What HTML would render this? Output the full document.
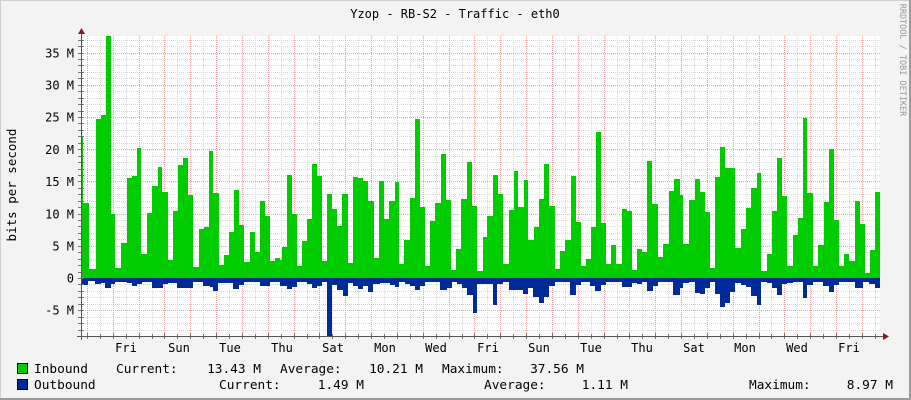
<!DOCTYPE html>
<html><head><meta charset="utf-8"><style>
html,body{margin:0;padding:0;background:#F3F3F3}
svg{display:block}
text{font-family:"DejaVu Sans Mono","Liberation Mono",monospace;fill:#000}
</style></head><body>
<svg id="g" width="911" height="400" xmlns="http://www.w3.org/2000/svg">
<rect x="0" y="0" width="911" height="400" fill="#F3F3F3"/>
<rect x="0.5" y="0.5" width="909" height="398" fill="none" stroke="#CFCFCF"/>
<line x1="910" y1="0" x2="910" y2="400" stroke="#9A9A9A" stroke-width="2"/>
<line x1="0" y1="399" x2="911" y2="399" stroke="#9A9A9A" stroke-width="2"/>
<rect x="81" y="36" width="799" height="300" fill="#FFFFFF"/>
<g id="grid"></g>
<path fill="#00CC00" d="M81,278 V136 H83 V203 H89 V269 H96 V119 H101 V115 H106 V36 H111 V214 H115 V268 H121 V243 H127 V178 H132 V176 H137 V148 H141 V254 H147 V213 H152 V186 H158 V167 H162 V192 H168 V260 H173 V211 H178 V165 H183 V158 H188 V195 H193 V267 H199 V229 H204 V227 H209 V151 H213 V193 H219 V265 H224 V255 H229 V232 H234 V190 H239 V225 H244 V262 H250 V232 H255 V252 H260 V201 H265 V216 H270 V261 H275 V258 H280 V260 H282 V247 H287 V175 H292 V214 H297 V266 H302 V241 H307 V219 H312 V164 H317 V176 H322 V261 H327 V194 H332 V209 H337 V226 H342 V194 H348 V263 H353 V177 H358 V178 H363 V181 H368 V201 H374 V258 H379 V181 H384 V219 H389 V201 H395 V182 H399 V264 H404 V240 H410 V198 H415 V119 H420 V207 H425 V266 H430 V221 H435 V203 H441 V154 H446 V200 H451 V270 H456 V249 H461 V199 H467 V162 H472 V206 H477 V271 H483 V237 H487 V216 H493 V175 H498 V194 H503 V264 H509 V210 H514 V171 H518 V207 H524 V180 H528 V240 H534 V227 H539 V199 H544 V164 H549 V206 H555 V269 H560 V251 H565 V240 H571 V176 H576 V222 H581 V266 H586 V259 H591 V227 H596 V132 H601 V223 H606 V264 H611 V245 H616 V264 H622 V209 H627 V211 H632 V270 H637 V249 H642 V252 H647 V161 H652 V204 H658 V257 H663 V244 H669 V191 H674 V179 H680 V195 H683 V244 H689 V200 H695 V179 H700 V192 H705 V212 H710 V268 H715 V177 H720 V147 H725 V168 H735 V248 H741 V229 H746 V208 H751 V188 H757 V173 H761 V271 H767 V254 H772 V211 H777 V158 H782 V196 H787 V266 H793 V235 H798 V218 H803 V118 H807 V193 H813 V266 H818 V245 H824 V202 H829 V149 H834 V220 H839 V266 H844 V254 H849 V261 H855 V201 H860 V224 H865 V273 H870 V250 H875 V192 H880 V278 Z"/>
<path fill="#002A97" d="M81,278 V285 H88 V281 H95 V284 H101 V283 H105 V288 H111 V284 H115 V282 H127 V283 H132 V286 H137 V284 H142 V282 H152 V288 H163 V284 H168 V283 H177 V288 H193 V282 H203 V286 H210 V287 H213 V291 H218 V283 H233 V289 H239 V285 H244 V282 H260 V286 H270 V282 H280 V286 H287 V289 H292 V287 H297 V282 H307 V284 H312 V288 H317 V286 H322 V282 H327 V336 H332 V285 H337 V290 H343 V296 H348 V283 H353 V286 H358 V289 H363 V286 H368 V292 H373 V284 H380 V283 H390 V285 H395 V287 H399 V282 H405 V284 H410 V286 H415 V290 H420 V286 H425 V282 H440 V290 H447 V288 H452 V282 H457 V284 H462 V288 H467 V295 H473 V313 H477 V284 H487 V284 H493 V305 H497 V284 H503 V282 H509 V290 H523 V294 H528 V288 H533 V297 H539 V303 H544 V297 H549 V286 H555 V282 H570 V295 H576 V285 H581 V282 H590 V286 H595 V291 H601 V285 H606 V282 H622 V287 H632 V283 H637 V284 H642 V282 H647 V291 H653 V286 H658 V282 H673 V295 H680 V288 H683 V283 H689 V282 H695 V293 H700 V294 H705 V288 H710 V282 H715 V294 H720 V307 H725 V303 H730 V292 H735 V283 H741 V285 H746 V287 H751 V296 H757 V305 H761 V282 H767 V283 H772 V288 H777 V295 H782 V284 H787 V283 H793 V282 H803 V298 H807 V285 H813 V282 H823 V286 H829 V292 H834 V285 H839 V282 H855 V288 H863 V282 H869 V284 H875 V288 H880 V278 Z"/>
<g id="axes"></g>
<line x1="81.5" y1="34" x2="81.5" y2="340" stroke="#555" stroke-width="1"/>
<line x1="77" y1="336.5" x2="884" y2="336.5" stroke="#555" stroke-width="1"/>
<polygon points="78,34 85,34 81.5,28" fill="#8B1A1A"/>
<polygon points="883,333 883,340 889,336.5" fill="#8B1A1A"/>
<text x="455" y="18" font-size="12" text-anchor="middle">Yzop - RB-S2 - Traffic - eth0</text>
<g font-size="12" text-anchor="end">
<text x="74" y="57.5">35 M</text><text x="74" y="89.5">30 M</text><text x="74" y="121.5">25 M</text>
<text x="74" y="154">20 M</text><text x="74" y="186">15 M</text><text x="74" y="218.5">10 M</text>
<text x="74" y="250.5">5 M</text><text x="74" y="282.5">0</text><text x="74" y="314.5">-5 M</text>
</g>
<g font-size="12" text-anchor="middle">
<text x="126" y="352">Fri</text><text x="179" y="352">Sun</text><text x="230" y="352">Tue</text>
<text x="282" y="352">Thu</text><text x="333" y="352">Sat</text><text x="385" y="352">Mon</text>
<text x="436" y="352">Wed</text><text x="488" y="352">Fri</text><text x="539" y="352">Sun</text>
<text x="591" y="352">Tue</text><text x="642" y="352">Thu</text><text x="694" y="352">Sat</text>
<text x="745" y="352">Mon</text><text x="797" y="352">Wed</text><text x="849" y="352">Fri</text>
</g>
<text transform="translate(16,185) rotate(-90)" font-size="12.5" text-anchor="middle">bits per second</text>
<text transform="translate(900,60) rotate(90)" font-size="8.5" text-anchor="middle" style="fill:#999">RRDTOOL / TOBI OETIKER</text>
<rect x="17.5" y="363.5" width="10" height="10" fill="#00CC00" stroke="#000"/>
<rect x="17.5" y="379.5" width="10" height="10" fill="#002A97" stroke="#000"/>
<g font-size="12.8" style="white-space:pre">
<text x="34" y="373">Inbound</text><text x="116" y="373">Current:</text><text x="261" y="373" text-anchor="end">13.43 M</text>
<text x="280" y="373">Average:</text><text x="423" y="373" text-anchor="end">10.21 M</text>
<text x="442" y="373">Maximum:</text><text x="584" y="373" text-anchor="end">37.56 M</text>
<text x="34" y="389">Outbound</text><text x="219" y="389">Current:</text><text x="364" y="389" text-anchor="end">1.49 M</text>
<text x="484" y="389">Average:</text><text x="628" y="389" text-anchor="end">1.11 M</text>
<text x="749" y="389">Maximum:</text><text x="893" y="389" text-anchor="end">8.97 M</text>
</g>
</svg>
<script>
(function(){
var ns="http://www.w3.org/2000/svg",g=document.getElementById("grid"),a=document.getElementById("axes");
function L(p,x1,y1,x2,y2,c,d){var l=document.createElementNS(ns,"line");l.setAttribute("x1",x1);l.setAttribute("y1",y1);l.setAttribute("x2",x2);l.setAttribute("y2",y2);l.setAttribute("stroke",c);l.setAttribute("stroke-width","1");if(d)l.setAttribute("stroke-dasharray",d);p.appendChild(l);}
for(var k=-9;k<=37;k++){var y=Math.round(278-6.44*k)+0.5;var maj=(k%5==0);
 L(g,81,y,880,y,maj?"#F4A0A0":"#D8D8D8","1,1");
 L(a,78,y,84,y,"#777");}
for(var i=0;i<62;i++){var x=Math.round(87+12.915*i)+0.5;if(x>880)break;var maj=(i%2==0);
 L(g,x,36,x,336,maj?"#F4A0A0":"#D8D8D8","1,1");
 L(a,x,maj?333:334,x,339,"#777");}
})();
</script>
</body></html>
